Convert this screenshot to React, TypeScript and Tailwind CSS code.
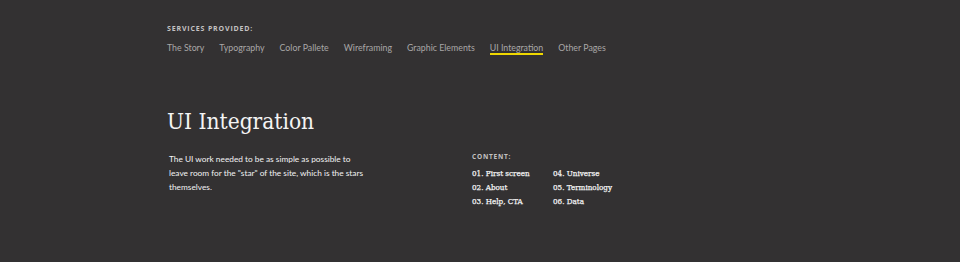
const services = [
  'The Story',
  'Typography',
  'Color Pallete',
  'Wireframing',
  'Graphic Elements',
  'UI Integration',
  'Other Pages',
]

const contents = [
  ['01. First screen', '04. Universe'],
  ['02. About', '05. Terminology'],
  ['03. Help, CTA', '06. Data'],
]

export default function App() {
  return (
    <div className="h-[262px] w-full bg-[#333132] overflow-hidden">
      <div className="mx-[167px] pt-[24px]">
        <div className="text-[7px] font-bold tracking-[0.12em] text-[#c4c2c2] font-['Open_Sans',sans-serif] leading-[9px]">
          SERVICES PROVIDED:
        </div>
        <nav className="mt-[9px] flex items-start gap-[15px] text-[8.8px] leading-[11px] font-['Lato',sans-serif] text-[#a9a7a7]">
          {services.map((s) => (
            <span key={s} className="flex flex-col">
              {s}
              {s === 'UI Integration' && <span className="h-[1.5px] bg-[#f0d800]" />}
            </span>
          ))}
        </nav>

        <h1 className="mt-[51px] text-[22.5px] leading-[30px] text-[#f4f4f4] font-['DejaVu_Serif',serif] [font-stretch:condensed]">
          UI Integration
        </h1>

        <div className="mt-[16px] flex">
          <p className="w-[305px] pl-[2px] pr-[105px] text-[8.3px] leading-[14px] text-[#f2f2f2] font-['Lato',sans-serif]">
            The UI work needed to be as simple as possible to leave room for the "star" of the site,
            which is the stars themselves.
          </p>
          <div className="pt-[1px]">
            <div className="text-[6.5px] font-bold tracking-[0.12em] text-[#c4c2c2] font-['Open_Sans',sans-serif] leading-[8px]">
              CONTENT:
            </div>
            <div className="mt-[6px] grid grid-cols-[81px_auto] text-[8px] leading-[14px] text-[#f2f2f2] font-['DejaVu_Serif',serif] [font-stretch:condensed] [-webkit-text-stroke:0.25px_#f2f2f2]">
              {contents.map(([a, b]) => (
                <div key={a} className="contents">
                  <span>{a}</span>
                  <span>{b}</span>
                </div>
              ))}
            </div>
          </div>
        </div>
      </div>
    </div>
  )
}
